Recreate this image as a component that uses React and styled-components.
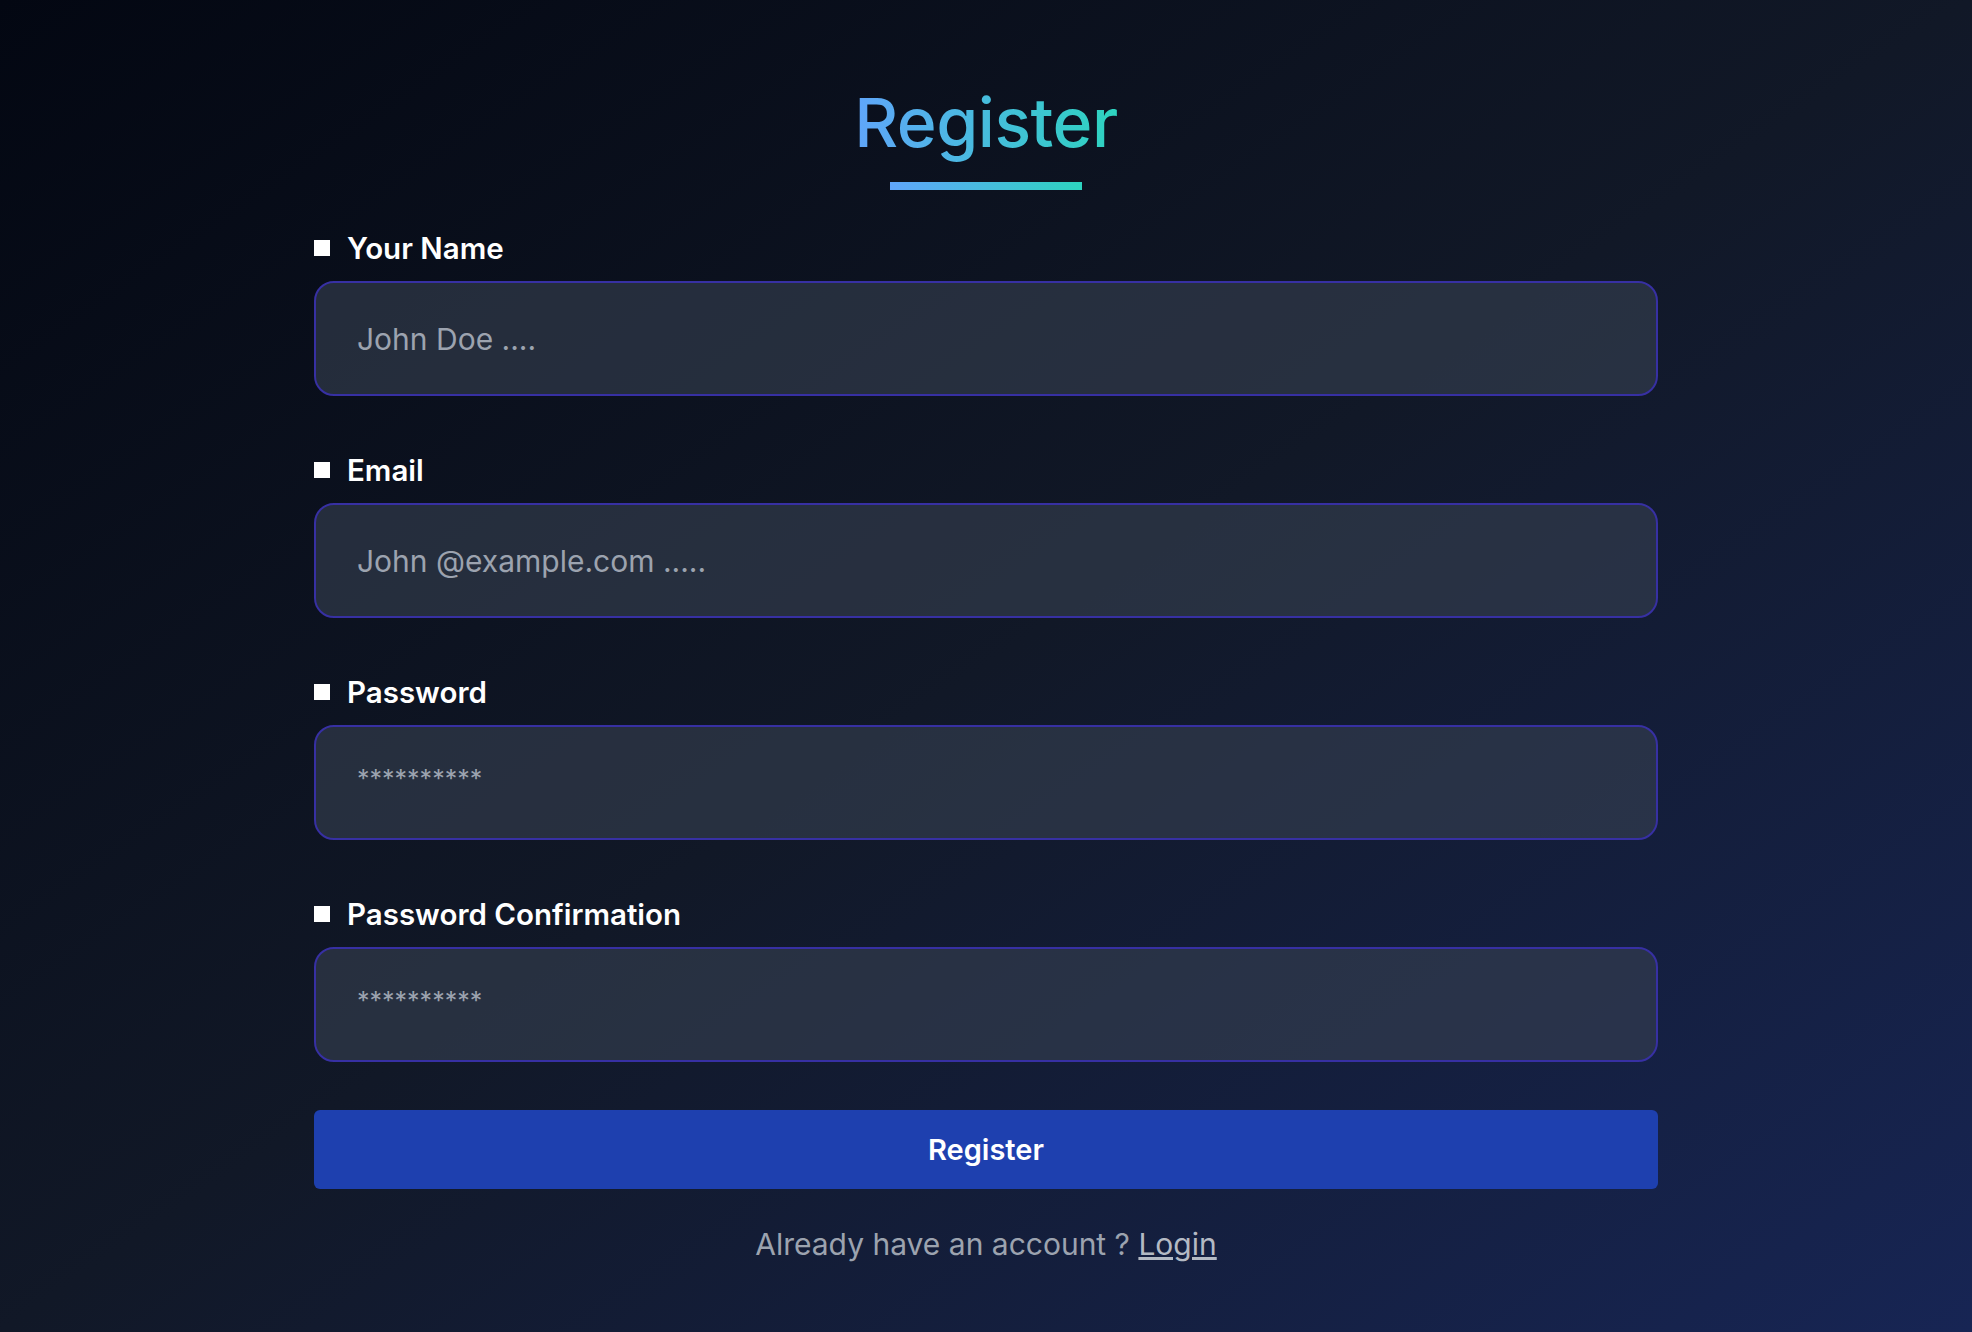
import React from "react";
import styled, { createGlobalStyle } from "styled-components";

const GlobalStyle = createGlobalStyle`
  * { box-sizing: border-box; }
  html, body { margin: 0; padding: 0; }
  body {
    font-family: Inter, "Noto Sans", "Liberation Sans", sans-serif;
    background: #030712;
  }
`;

const fields = [
  { label: "Your Name", placeholder: "John Doe ....", type: "text" },
  { label: "Email", placeholder: "John @example.com .....", type: "email" },
  { label: "Password", placeholder: "**********", type: "password" },
  { label: "Password Confirmation", placeholder: "**********", type: "password" },
];

function App() {
  return (
    <Page>
      <GlobalStyle />
      <Form onSubmit={(e) => e.preventDefault()}>
        <Header>
          <Title>Register</Title>
          <Underline />
        </Header>
        {fields.map((f) => (
          <Field key={f.label}>
            <Label>
              <Bullet />
              {f.label}
            </Label>
            <Input type="text" placeholder={f.placeholder} stars={f.type === "password"} />
          </Field>
        ))}
        <Button type="submit">Register</Button>
        <Footer>
          Already have an account ? <LoginLink href="#">Login</LoginLink>
        </Footer>
      </Form>
    </Page>
  );
}

const Page = styled.div`
  width: 100%;
  min-height: 1332px;
  background: linear-gradient(to bottom right, #030712 0%, #111827 50%, #172554 100%);
  display: flex;
  justify-content: center;
`;

const Form = styled.form`
  width: 1344px;
  padding-top: 80px;
  display: flex;
  flex-direction: column;
`;

const Header = styled.div`
  display: flex;
  flex-direction: column;
  align-items: center;
  margin-bottom: 38px;
`;

const Title = styled.h1`
  margin: 0;
  font-size: 68px;
  line-height: 84px;
  font-weight: 500;
  letter-spacing: -0.5px;
  background: linear-gradient(to right, #60a5fa, #2dd4bf);
  -webkit-background-clip: text;
  background-clip: text;
  color: transparent;
`;

const Underline = styled.div`
  width: 192px;
  height: 8px;
  margin-top: 18px;
  background: linear-gradient(to right, #60a5fa, #2dd4bf);
`;

const Field = styled.div`
  display: flex;
  flex-direction: column;
  margin-bottom: 54px;
`;

const Label = styled.label`
  display: flex;
  align-items: center;
  gap: 17px;
  color: #ffffff;
  font-size: 29.5px;
  font-weight: 600;
  line-height: 40px;
  margin-bottom: 13px;
`;

const Bullet = styled.span`
  width: 16px;
  height: 16px;
  background: #ffffff;
  flex-shrink: 0;
`;

const Input = styled.input`
  height: 115px;
  width: 100%;
  padding: ${(p) => (p.stars ? "0 41px 8px" : "0 41px")};
  border: 2px solid #3730a3;
  border-radius: 20px;
  background: rgba(55, 65, 81, 0.6);
  color: #e5e7eb;
  font-family: inherit;
  font-size: ${(p) => (p.stars ? "25px" : "30px")};
  outline: none;

  &::placeholder {
    color: #9ca3af;
  }
`;

const Button = styled.button`
  height: 79px;
  margin-top: -6px;
  border: none;
  border-radius: 6px;
  background: #1e40af;
  color: #ffffff;
  font-family: inherit;
  font-size: 29px;
  font-weight: 600;
  cursor: pointer;
`;

const Footer = styled.p`
  margin: 35px 0 0;
  text-align: center;
  color: #9ca3af;
  font-size: 30px;
  line-height: 40px;
`;

const LoginLink = styled.a`
  color: #b4bac4;
  text-decoration: underline;
`;

export default App;
